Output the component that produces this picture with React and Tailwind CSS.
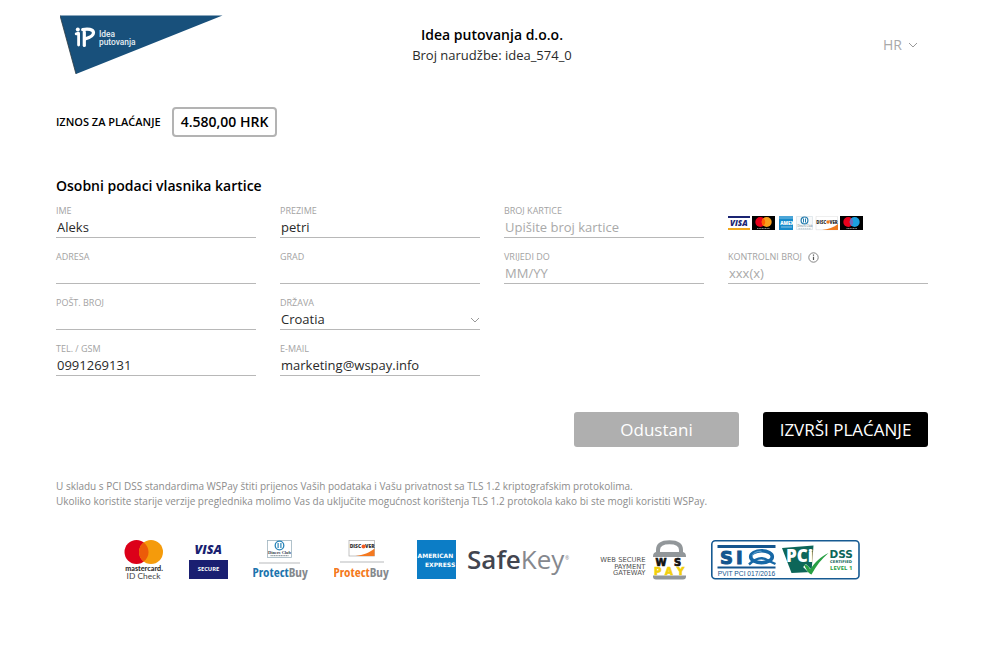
import React from 'react';

const LABEL = 'flex h-3 items-center gap-1.5 text-[9px] leading-3 text-[#a3a3a3]';
const CONTROL =
  'block h-[21px] w-full rounded-none border-b border-[#b8b8b8] bg-transparent px-px text-[13px] leading-5 text-[#2a2a2a] outline-none placeholder:text-[#a9a9a9] placeholder:opacity-100';

function Chevron() {
  return (
    <svg viewBox="0 0 10 6" className="h-1.5 w-2.5" fill="none" stroke="#999" strokeWidth="1">
      <path d="M1 1l4 4 4-4" />
    </svg>
  );
}

function Field({ id, label, value, placeholder, start, info }) {
  return (
    <div className={start ? 'md:col-start-1' : ''}>
      <label htmlFor={id} className={LABEL}>
        {label}
        {info && (
          <svg viewBox="0 0 11 11" className="h-[11px] w-[11px]" fill="none" stroke="#777">
            <circle cx="5.5" cy="5.5" r="4.7" strokeWidth="0.9" />
            <path d="M5.5 4.8v3.2M5.5 2.6v1.2" strokeWidth="1.2" stroke="#555" />
          </svg>
        )}
      </label>
      <input id={id} type="text" defaultValue={value} placeholder={placeholder} className={CONTROL} />
    </div>
  );
}

function IdeaLogo() {
  return (
    <svg viewBox="0 0 163 59" className="h-[59px] w-[163px]" role="img" aria-label="Idea putovanja">
      <path d="M0 .5H162.500L16 59z" fill="#18507b" />
      <path d="M0 .5L16 59" stroke="#2d3a40" strokeWidth=".8" />
      <g fill="none" stroke="#fff" strokeLinecap="round">
        <path d="M16.200 18.800l2.300-.6M18.600 18.500v11.500" strokeWidth="2.800" />
        <path d="M24.300 17v13.500" strokeWidth="3.200" />
        <path d="M22.700 14.600c4.800-1.200 10.800-.5 10.800 3.200 0 3.300-4.300 5-8.500 6.200" strokeWidth="3.200" />
      </g>
      <circle cx="17.800" cy="14.400" r="2" fill="#fff" />
      <g fill="#e6eef4" fontFamily="Roboto, sans-serif" fontSize="8.400" fontWeight="500">
        <text x="39" y="21.500">Idea</text>
        <text x="39" y="29.500">putovanja</text>
      </g>
    </svg>
  );
}

function CardBrands() {
  return (
    <svg viewBox="0 0 136 15" className="h-[15px] w-[136px]" role="img" aria-label="Visa, Mastercard, American Express, Diners, Discover, Maestro">
      <path d="M0 0h22v2H0z" fill="#1a2472" />
      <path d="M0 12h22v2H0z" fill="#f2a81d" />
      <text x="2" y="10" fontFamily="Open Sans, sans-serif" fontSize="8" fontWeight="800" fontStyle="italic" fill="#1a2472">VISA</text>
      <path d="M24 0h23v14H24z" fill="#000" />
      <circle cx="32.300" cy="6" r="5" fill="#e8001b" />
      <circle cx="38.700" cy="6" r="5" fill="#f79e1b" />
      <path d="M35.500 2.200a5 5 0 0 1 0 7.600 5 5 0 0 1 0-7.600" fill="#ff5f00" />
      <path d="M29 12.500h13" stroke="#aaa" strokeWidth=".8" strokeDasharray="1.200 .4" />
      <path d="M51 0h14v14H51z" fill="#168bcb" />
      <path d="M51 0h14v3H51z" fill="#4ca6d8" />
      <text x="52.200" y="8.600" fontFamily="Open Sans, sans-serif" fontSize="4.600" fontWeight="800" fill="#fff">AMEX</text>
      <path d="M53 11h11" stroke="#8cc6e6" strokeWidth="1" />
      <path d="M68.500.5h16v13h-16z" fill="#f7f9fa" stroke="#c9d6dd" strokeWidth=".5" />
      <circle cx="76.500" cy="4.400" r="3.400" fill="#fff" stroke="#247cae" strokeWidth="1.200" />
      <path d="M75.500 2.500v4M77.500 2.500v4" stroke="#247cae" />
      <text x="69.400" y="11.300" fontFamily="Open Sans, sans-serif" fontSize="2.800" fill="#647883">Diners Club</text>
      <path d="M70.500 12.800h12.500" stroke="#9fb0b8" strokeWidth=".7" strokeDasharray="1.500 .5" />
      <path d="M88 .3h21.500v13.400H88z" fill="#fff" stroke="#ddd" strokeWidth=".6" />
      <path d="M94 14c6-.5 12-3 16-6v6z" fill="#ee7b20" />
      <text x="88.300" y="7.600" fontFamily="Open Sans, sans-serif" fontSize="4.300" fontWeight="800" fill="#333">DISC</text>
      <circle cx="100" cy="6" r="1.700" fill="#ee7b20" />
      <text x="101.500" y="7.600" fontFamily="Open Sans, sans-serif" fontSize="4.300" fontWeight="800" fill="#333">VER</text>
      <path d="M112 0h23v14h-23z" fill="#000" />
      <circle cx="120.300" cy="6" r="5" fill="#e8001b" />
      <circle cx="126.700" cy="6" r="5" fill="#1ba0df" />
      <path d="M123.500 2.200a5 5 0 0 1 0 7.600 5 5 0 0 1 0-7.600" fill="#6c6bbd" />
      <path d="M118.500 12.500h10.500" stroke="#aaa" strokeWidth=".8" strokeDasharray="1.200 .4" />
    </svg>
  );
}

function MastercardIdCheck() {
  return (
    <svg viewBox="0 0 41 40" className="h-10 w-[41px]" role="img" aria-label="Mastercard ID Check">
      <circle cx="12.500" cy="12" r="12" fill="#dc0019" />
      <circle cx="27" cy="12" r="12" fill="#f59b0b" />
      <path d="M19.750 2.400a12 12 0 0 1 0 19.200 12 12 0 0 1 0-19.200" fill="#ec5b09" />
      <text x="20" y="30.800" textAnchor="middle" fontFamily="Lato, sans-serif" fontSize="7.200" fontWeight="900" fill="#332f30">mastercard.</text>
      <text x="19.500" y="39" textAnchor="middle" fontFamily="Lato, sans-serif" fontSize="8.400" fill="#444">ID Check</text>
    </svg>
  );
}

function VisaSecure() {
  return (
    <svg viewBox="0 0 40 40" className="h-10 w-10" role="img" aria-label="Visa Secure">
      <path d="M0 20h39v19H0z" fill="#1a1f71" />
      <text x="5.500" y="14" fontFamily="Open Sans, sans-serif" fontSize="12.500" fontWeight="800" fontStyle="italic" fill="#1a1f71">VISA</text>
      <text x="19.500" y="31.300" textAnchor="middle" fontFamily="Open Sans, sans-serif" fontSize="5.800" fontWeight="700" fill="#fff">SECURE</text>
    </svg>
  );
}

function ProtectBuyText({ color }) {
  return (
    <text x="-.5" y="36.500" fontFamily="Open Sans Condensed, Roboto, sans-serif" fontSize="13" fontWeight="700" fill={color}>
      Protect<tspan fontWeight="400" fill="#85898d">Buy</tspan>
    </text>
  );
}

function DinersProtectBuy() {
  return (
    <svg viewBox="0 0 57 40" className="h-10 w-[57px]" role="img" aria-label="Diners Club ProtectBuy">
      <rect x="14.500" y=".5" width="24" height="17" fill="#fff" stroke="#9fb4bf" strokeWidth=".8" />
      <circle cx="26.500" cy="5.500" r="4.300" fill="#fff" stroke="#2884b8" strokeWidth="1.300" />
      <path d="M25.100 3v5M27.900 3v5" stroke="#2884b8" strokeWidth="1.200" />
      <text x="26.500" y="13.800" textAnchor="middle" fontFamily="Liberation Serif, serif" fontSize="4.400" fontWeight="700" fill="#34434c">Diners Club</text>
      <path d="M17.500 15.700h18" stroke="#7d8b93" strokeWidth="1" strokeDasharray="1.300 .4" />
      <path d="M6 23h41" stroke="#b7b9bb" />
      <ProtectBuyText color="#1c74ae" />
    </svg>
  );
}

function DiscoverProtectBuy() {
  return (
    <svg viewBox="0 0 59 40" className="h-10 w-[59px]" role="img" aria-label="Discover ProtectBuy">
      <rect x="15" y=".5" width="25.500" height="15.500" fill="#fff" stroke="#aaa" strokeWidth=".7" />
      <path d="M21.500 16c8-.8 14-3.500 19-7.500V16z" fill="#f47920" />
      <text x="15.700" y="8.300" fontFamily="Open Sans, sans-serif" fontSize="5" fontWeight="800" fill="#333">DISC</text>
      <circle cx="29.500" cy="6.500" r="2" fill="#f15a22" />
      <text x="31.100" y="8.300" fontFamily="Open Sans, sans-serif" fontSize="5" fontWeight="800" fill="#333">VER</text>
      <path d="M6 22h44" stroke="#b7b9bb" />
      <ProtectBuyText color="#f47920" />
    </svg>
  );
}

function AmexSafeKey() {
  return (
    <svg viewBox="0 0 153 40" className="h-10 w-[153px]" role="img" aria-label="American Express SafeKey">
      <path d="M0 0h39v39H0z" fill="#0c7dc6" />
      <g fontFamily="DejaVu Sans, sans-serif" fontSize="6" fontWeight="700" fill="#fff">
        <text x=".6" y="17.800">AMERICAN</text>
        <text x="8" y="26.600">EXPRESS</text>
      </g>
      <text x="50" y="29.300" fontFamily="Open Sans, sans-serif" fontSize="26" fontWeight="600" fill="#42454f">
        Safe<tspan fontWeight="400" fill="#85888e">Key</tspan>
      </text>
      <text x="148" y="20" fontFamily="Open Sans, sans-serif" fontSize="5" fill="#85888e">®</text>
    </svg>
  );
}

function WsPay() {
  return (
    <svg viewBox="0 0 93 40" className="h-10 w-[93px]" role="img" aria-label="WSPay Web Secure Payment Gateway">
      <g textAnchor="end" fontFamily="DejaVu Sans, sans-serif" fontSize="6.800" fill="#555">
        <text x="51.500" y="21.800">WEB SECURE</text>
        <text x="51.500" y="28.500">PAYMENT</text>
        <text x="51.500" y="35.200">GATEWAY</text>
      </g>
      <path d="M64 14V10c0-5.500 4.500-7.800 11.500-7.800S87 4.500 87 10v4" fill="none" stroke="#92979a" strokeWidth="4" />
      <path d="M59 17c0-3.500 1-5 4.500-5h24c3.500 0 4.500 1.500 4.500 5z" fill="#92979a" />
      <path d="M59 35.500h33v1q0 3-3 3H62q-3 0-3-3z" fill="#92979a" />
      <g fontFamily="DejaVu Sans, sans-serif" fontSize="10" fontWeight="700" strokeWidth=".7">
        <g fill="#111" stroke="#111">
          <text x="61.500" y="25.500">W</text>
          <text x="80" y="25.500">S</text>
        </g>
        <g fill="#f2cf0a" stroke="#f2cf0a">
          <text x="60" y="34.500">P</text>
          <text x="71" y="34.500">A</text>
          <text x="83" y="34.500">Y</text>
        </g>
      </g>
    </svg>
  );
}

function SiqPci() {
  return (
    <svg viewBox="0 0 149 40" className="h-10 w-[149px]" role="img" aria-label="SIQ PCI DSS Certified Level 1">
      <rect x=".8" y=".8" width="147.200" height="38" rx="3.500" fill="#fff" stroke="#165a92" strokeWidth="1.600" />
      <path d="M6.500 5h58v3h-58zM6.500 26.500h58v2h-58z" fill="#14558e" />
      <g fontFamily="DejaVu Sans, sans-serif" fontSize="18" fontWeight="700" fill="#14558e" stroke="#14558e" strokeWidth="1">
        <text x="9" y="24">S</text>
        <text x="25" y="24">I</text>
      </g>
      <ellipse cx="50.500" cy="16.700" rx="10.800" ry="6" fill="#fff" stroke="#1768a6" strokeWidth="3.600" />
      <path d="M38 24.500c7-6.500 14-7.500 19-4l7.500 3.500" fill="none" stroke="#1768a6" strokeWidth="2.400" />
      <path d="M41 16c1.500-3.500 5-4.800 9.500-4.800" fill="none" stroke="#7fb9de" strokeWidth=".8" />
      <text x="35.500" y="35.500" textAnchor="middle" fontFamily="Liberation Sans, sans-serif" fontSize="6.700" fill="#14558e">PVIT PCI 017/2016</text>
      <path d="M71 8l31.500-2.500-2 26.500-20 1z" fill="#0d6659" />
      <path d="M93.500 25.500l6.500 6.500 16.500-17.500" fill="none" stroke="#fff" strokeWidth="4" />
      <text x="75" y="22" fontFamily="Open Sans, sans-serif" fontSize="17" fontWeight="800" fill="#fff">PCi</text>
      <path d="M93 24.500c3 0 4.500 1.500 6.200 4.800 5-7.300 10-12.300 18.300-16.300-7 6-12.500 13-17 21.500-3-1-5.500-5-7.500-10z" fill="#28a044" />
      <text x="118.500" y="17.800" fontFamily="DejaVu Sans, sans-serif" fontSize="10.500" fontWeight="700" fill="#0d6659">DSS</text>
      <text x="119" y="23.200" fontFamily="DejaVu Sans, sans-serif" fontSize="3.800" fontWeight="700" fill="#0d6659">CERTIFIED</text>
      <text x="119" y="30" fontFamily="Open Sans, sans-serif" fontSize="6" fontWeight="700" fill="#2ba048">LEVEL 1</text>
    </svg>
  );
}

export default function App() {
  return (
    <div className="min-h-screen bg-white pt-[15px] pr-[72px] pb-8 pl-14 font-['Open_Sans',sans-serif] text-[#2a2a2a]">
      <header className="grid grid-cols-3 items-center">
        <div className="pl-1">
          <IdeaLogo />
        </div>
        <div className="text-center text-[13px] leading-5">
          <h1 className="text-sm leading-5 font-semibold text-black">Idea putovanja d.o.o.</h1>
          <p>Broj narudžbe: idea_574_0</p>
        </div>
        <div className="flex items-center justify-end gap-1.5 pr-2.5">
          <select aria-label="Jezik" defaultValue="HR" className="appearance-none bg-transparent text-sm leading-5 text-[#a9a9a9] outline-none">
            <option>HR</option>
          </select>
          <Chevron />
        </div>
      </header>

      <main>
        <div className="mt-[33px] flex items-center gap-[11px] font-semibold text-black">
          <span className="text-[11px] leading-4">IZNOS ZA PLAĆANJE</span>
          <strong className="rounded border-2 border-[#b3b3b3] px-[7px] py-[3px] text-sm leading-5 font-semibold">4.580,00 HRK</strong>
        </div>

        <form onSubmit={(e) => e.preventDefault()}>
          <h2 className="mt-[39px] text-sm leading-5 font-semibold text-black">Osobni podaci vlasnika kartice</h2>
          <div className="mt-[9px] grid grid-cols-2 gap-x-6 gap-y-[13px] md:grid-cols-4">
            <Field id="ime" label="IME" value="Aleks" />
            <Field id="prezime" label="PREZIME" value="petri" />
            <Field id="kartica" label="BROJ KARTICE" placeholder="Upišite broj kartice" />
            <div className="flex items-center pt-1">
              <CardBrands />
            </div>
            <Field id="adresa" label="ADRESA" />
            <Field id="grad" label="GRAD" />
            <Field id="vrijedi" label="VRIJEDI DO" placeholder="MM/YY" />
            <Field id="cvv" label="KONTROLNI BROJ" placeholder="xxx(x)" info />
            <Field id="posta" label="POŠT. BROJ" start />
            <div>
              <label htmlFor="drzava" className={LABEL}>DRŽAVA</label>
              <div className="relative">
                <select id="drzava" defaultValue="Croatia" className={`${CONTROL} appearance-none`}>
                  <option>Croatia</option>
                </select>
                <span className="pointer-events-none absolute inset-y-0 right-0 flex items-center">
                  <Chevron />
                </span>
              </div>
            </div>
            <Field id="tel" label="TEL. / GSM" value="0991269131" start />
            <Field id="email" label="E-MAIL" value="marketing@wspay.info" />
          </div>

          <div className="mt-9 flex flex-wrap justify-end gap-6 text-[17px] leading-6 text-white">
            <button type="button" className="h-[35px] w-[165px] rounded-[3px] bg-[#afafaf]">Odustani</button>
            <button type="submit" className="h-[35px] w-[165px] rounded-[3px] bg-black">IZVRŠI PLAĆANJE</button>
          </div>
        </form>
      </main>

      <footer>
        <p className="mt-8 text-[10px] leading-[15px] text-[#8c8c8c]">
          U skladu s PCI DSS standardima WSPay štiti prijenos Vaših podataka i Vašu privatnost sa TLS 1.2 kriptografskim protokolima.
          <br />
          Ukoliko koristite starije verzije preglednika molimo Vas da uključite mogućnost korištenja TLS 1.2 protokola kako bi ste mogli koristiti WSPay.
        </p>
        <div className="mt-[31px] flex flex-wrap items-center justify-center gap-6">
          <MastercardIdCheck />
          <VisaSecure />
          <DinersProtectBuy />
          <DiscoverProtectBuy />
          <AmexSafeKey />
          <WsPay />
          <SiqPci />
        </div>
      </footer>
    </div>
  );
}
